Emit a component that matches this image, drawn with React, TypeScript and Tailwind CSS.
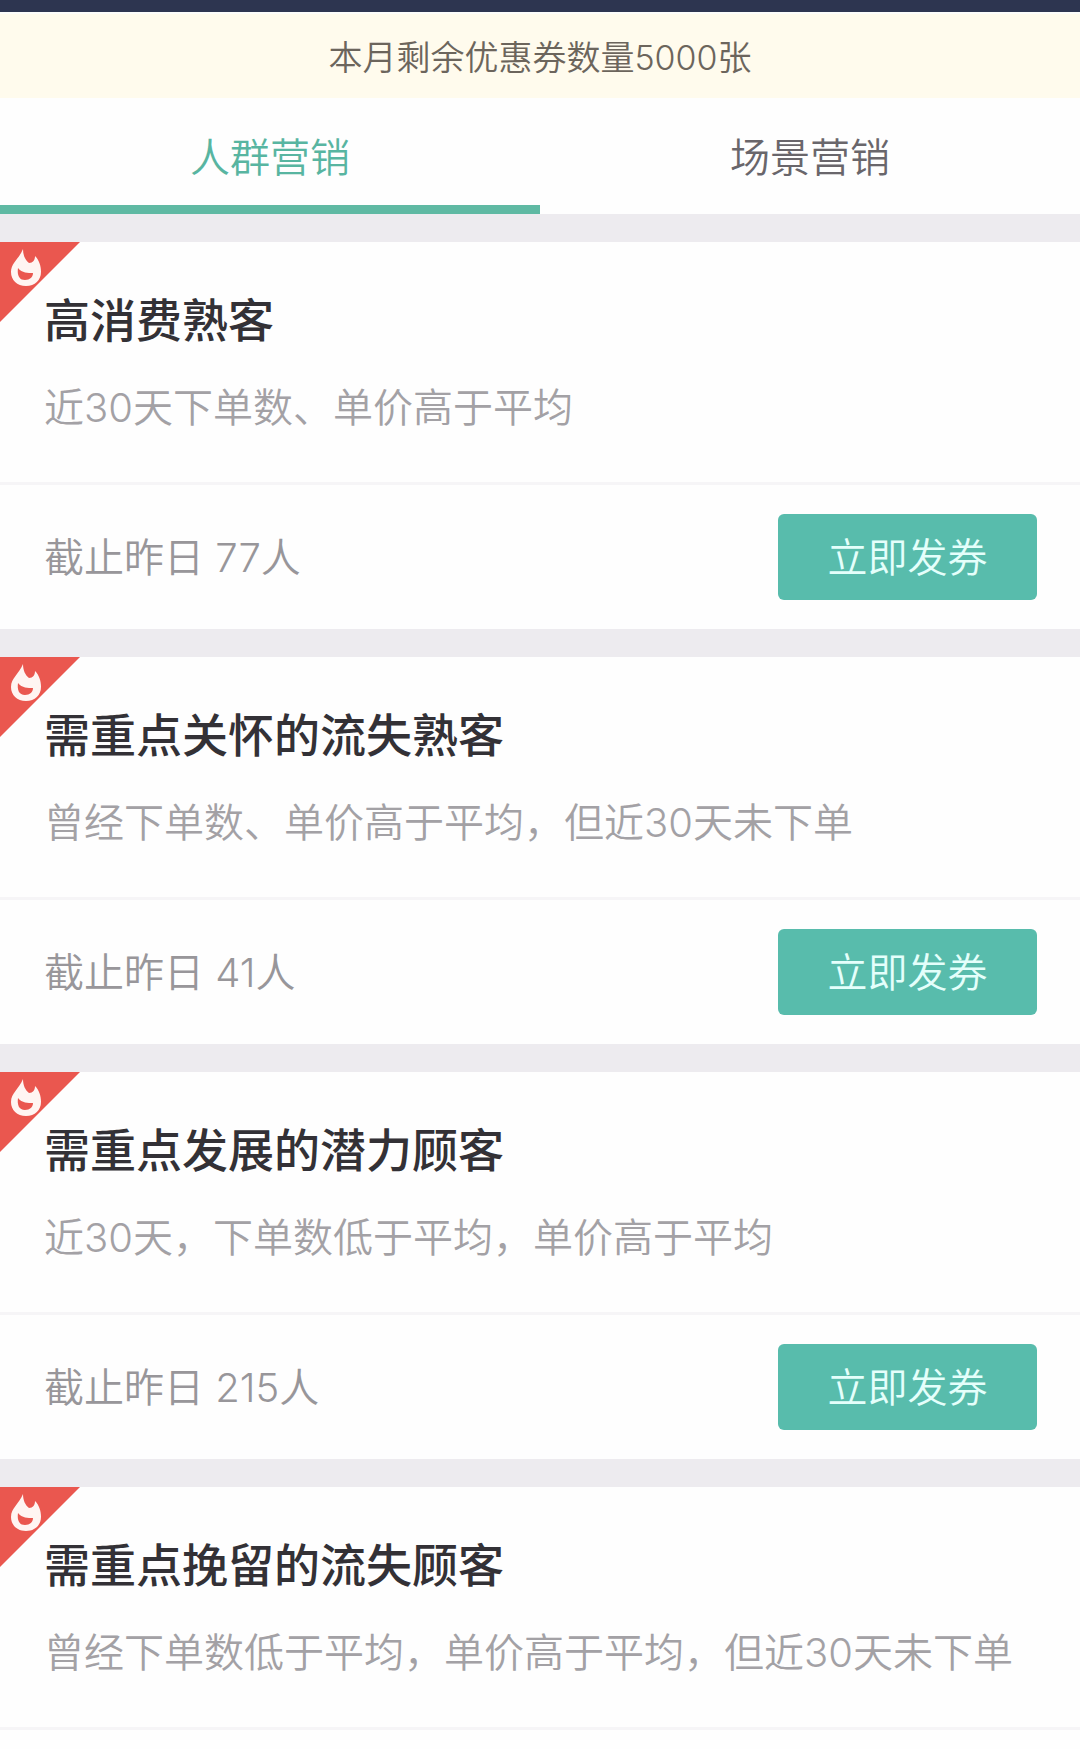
import React, { useState } from 'react';
import clsx from 'clsx';

interface Segment {
  title: string;
  description: string;
  count?: number;
}

const tabs = ['人群营销', '场景营销'];

const segments: Segment[] = [
  { title: '高消费熟客', description: '近30天下单数、单价高于平均', count: 77 },
  { title: '需重点关怀的流失熟客', description: '曾经下单数、单价高于平均，但近30天未下单', count: 41 },
  { title: '需重点发展的潜力顾客', description: '近30天，下单数低于平均，单价高于平均', count: 215 },
  { title: '需重点挽留的流失顾客', description: '曾经下单数低于平均，单价高于平均，但近30天未下单' },
];

const HotBadge: React.FC = () => (
  <svg className="absolute top-0 left-0 size-20" viewBox="0 0 80 80" aria-hidden="true">
    <path d="M0 0H80L0 80Z" fill="#ea574f" />
    <path
      fill="#fff5f2"
      fillRule="evenodd"
      d="M23 7C23 13 25 18 29 21C33 21 35 18 35 14C39 18 41 24 41 30C41 38 35 44 26 44C17 44 11 38 11 30C11 21 19 17 23 7ZM18 26C17 33 19 38 25 38C30 38 33 35 33 31C28 31 22 31 18 26Z"
    />
  </svg>
);

const SegmentCard: React.FC<Segment> = ({ title, description, count }) => {
  return (
    <article className="relative bg-[#fefefe] last:grow">
      <HotBadge />
      <div className="px-11 pt-[46px] pb-[46px] border-b-3 border-[#f6f5f7]">
        <h2 className="text-[46px] leading-16 font-medium text-[#333136]">{title}</h2>
        <p className="mt-7 text-[40px] leading-14 text-[#a3a1a5]">{description}</p>
      </div>
      {count !== undefined && (
        <div className="h-36 pl-11 pr-[43px] flex items-center justify-between">
          <span className="pt-0.5 text-[40px] leading-14 text-[#98969a]">截止昨日 {count}人</span>
          <button
            type="button"
            className="w-[259px] h-[86px] pt-0.5 rounded-md bg-[#58bcac] text-[40px] leading-14 text-[#e4fffb]"
          >
            立即发券
          </button>
        </div>
      )}
    </article>
  );
};

const App: React.FC = () => {
  const [activeTab, setActiveTab] = useState(0);

  return (
    <div className="min-h-screen flex flex-col bg-[#edebef] font-[Inter,'Noto_Sans_CJK_SC',sans-serif] font-[350]">
      <div className="h-3 bg-[#2d3550]" />
      <p className="h-[86px] pt-0.5 flex items-center justify-center border-t-2 border-[#fcfdfb] bg-[#fffbed] text-[34px] text-[#6c655c]">
        本月剩余优惠券数量5000张
      </p>

      <nav className="flex bg-[#fefefe]">
        {tabs.map((tab, index) => (
          <button
            key={tab}
            type="button"
            onClick={() => setActiveTab(index)}
            className={clsx(
              'flex-1 h-29 pt-3 border-b-9 text-[40px]',
              index === activeTab ? 'border-[#5fb9a3] text-[#58b5a1]' : 'border-transparent text-[#69666b]'
            )}
          >
            {tab}
          </button>
        ))}
      </nav>

      <main className="mt-7 grow flex flex-col gap-7">
        {segments.map((segment) => (
          <SegmentCard key={segment.title} {...segment} />
        ))}
      </main>
    </div>
  );
};

export default App;
